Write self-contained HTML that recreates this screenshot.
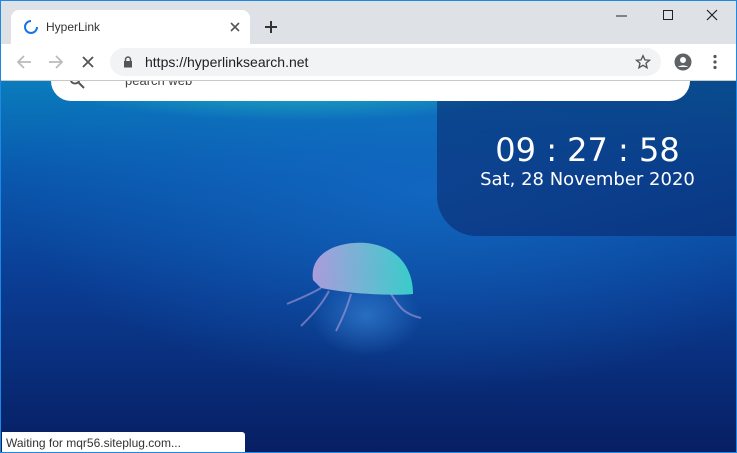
<!DOCTYPE html>
<html><head><meta charset="utf-8"><style>
*{margin:0;padding:0;box-sizing:border-box}
body{width:737px;height:453px;overflow:hidden;font-family:"Liberation Sans",sans-serif;background:#1a7fd6;position:relative}
.win{position:absolute;left:0;top:0;width:737px;height:453px;border:1px solid #1e88e5;overflow:hidden}
.tabbar{position:absolute;left:0;top:0;width:100%;height:43px;background:#dee1e6;z-index:5}
.tab{position:absolute;left:10px;top:9px;width:239px;height:34px;background:#fff;border-radius:8px 8px 0 0}
.tab .t{position:absolute;left:35px;top:10px;font-size:12px;color:#333}
.toolbar{position:absolute;left:0;top:43px;width:100%;height:37px;background:#fff;border-bottom:1px solid #c8c8c8;z-index:5}
.omni{position:absolute;left:109px;top:4px;width:551px;height:28px;background:#f1f3f4;border-radius:14px}
.omni .u{position:absolute;left:35px;top:6px;font-size:14px;color:#202124}
.content{position:absolute;left:0;top:80px;width:100%;height:373px;
background:
radial-gradient(ellipse 260px 40px at 300px 0px,rgba(40,200,190,.75),transparent),
radial-gradient(ellipse 420px 200px at 430px 110px,rgba(20,110,200,.7),transparent),
linear-gradient(180deg,#0a7cbc 0%,#0a58ae 25%,#0a3c92 55%,#081e62 100%)}
.search{position:absolute;left:50px;top:-20px;width:639px;height:40px;background:#fff;border-radius:0 0 20px 20px;z-index:2}
.clock{position:absolute;left:436px;top:0;width:301px;height:155px;background:rgba(8,30,95,.5);border-bottom-left-radius:40px;color:#fff;text-align:center;z-index:1}
.status{position:absolute;left:1px;top:431px;width:243px;height:22px;background:#fff;border-top-right-radius:3px;font-size:12px;color:#333;padding:4px 0 0 4px;z-index:6}
.jelly{position:absolute;left:270px;top:235px}
</style></head><body><div class="win">
<div class="tabbar">
 <div class="tab">
  <svg style="position:absolute;left:12px;top:9px" width="16" height="16" viewBox="0 0 16 16"><path d="M8 2 A6 6 0 1 0 14 8" fill="none" stroke="#1a73e8" stroke-width="2"/></svg>
  <span class="t">HyperLink</span>
  <svg style="position:absolute;left:219px;top:12px" width="10" height="10" viewBox="0 0 10 10"><path d="M1 1L9 9M9 1L1 9" stroke="#555" stroke-width="1.6"/></svg>
 </div>
 <svg style="position:absolute;left:263px;top:19px" width="14" height="14" viewBox="0 0 14 14"><path d="M7 1V13M1 7H13" stroke="#333" stroke-width="2"/></svg>
 <svg style="position:absolute;left:614px;top:8px" width="110" height="14" viewBox="0 0 110 14"><path d="M1 7H12" stroke="#222" stroke-width="1"/><rect x="48.5" y="1.5" width="9" height="9" fill="none" stroke="#222"/><path d="M92 1L102 11M102 1L92 11" stroke="#222" stroke-width="1.2"/></svg>
</div>
<div class="toolbar">
 <svg style="position:absolute;left:15px;top:10px" width="16" height="16" viewBox="0 0 16 16"><path d="M15 8H2M8 2L2 8L8 14" fill="none" stroke="#bbb" stroke-width="1.8"/></svg>
 <svg style="position:absolute;left:47px;top:10px" width="16" height="16" viewBox="0 0 16 16"><path d="M1 8H14M8 2L14 8L8 14" fill="none" stroke="#bbb" stroke-width="1.8"/></svg>
 <svg style="position:absolute;left:81px;top:12px" width="12" height="12" viewBox="0 0 12 12"><path d="M1 1L11 11M11 1L1 11" stroke="#555" stroke-width="1.8"/></svg>
 <div class="omni">
  <svg style="position:absolute;left:13px;top:8px" width="10" height="12" viewBox="0 0 10 12"><path d="M2.5 5V3.5a2.5 2.5 0 0 1 5 0V5" fill="none" stroke="#555" stroke-width="1.4"/><rect x="1" y="5" width="8" height="6.5" fill="#555"/></svg>
  <span class="u">https://hyperlinksearch.net</span>
  <svg style="position:absolute;left:525px;top:6px" width="16" height="16" viewBox="0 0 24 24"><path d="M12 2.5l2.9 6.3 6.8.6-5.2 4.5 1.6 6.7L12 17l-6.1 3.6 1.6-6.7-5.2-4.5 6.8-.6z" fill="none" stroke="#555" stroke-width="2"/></svg>
 </div>
 <svg style="position:absolute;left:673px;top:9px" width="18" height="18" viewBox="0 0 18 18"><circle cx="9" cy="9" r="8.5" fill="#5f6368"/><circle cx="9" cy="7" r="3" fill="#fff"/><path d="M3.8 14a6.5 4 0 0 1 10.4 0" fill="#fff"/></svg>
 <svg style="position:absolute;left:712px;top:10px" width="4" height="16" viewBox="0 0 4 16"><circle cx="2" cy="2.5" r="1.6" fill="#555"/><circle cx="2" cy="8" r="1.6" fill="#555"/><circle cx="2" cy="13.5" r="1.6" fill="#555"/></svg>
</div>
<div class="content">
 <div class="search">
  <svg style="position:absolute;left:18px;top:12px" width="16" height="16" viewBox="0 0 16 16"><circle cx="6" cy="6" r="4.5" fill="none" stroke="#555" stroke-width="1.8"/><path d="M9.5 9.5L15 15" stroke="#555" stroke-width="2"/></svg>
  <span style="position:absolute;left:74px;top:12px;font-size:13px;color:#444">pearch web</span>
 </div>
 <div class="clock">
  <div style="font-size:32px;margin-top:50px;line-height:38px;font-family:'DejaVu Sans','Liberation Sans',sans-serif">09 : 27 : 58</div>
  <div style="font-size:18px;margin-top:0px;font-family:'DejaVu Sans','Liberation Sans',sans-serif">Sat, 28 November 2020</div>
 </div>
</div>
<svg class="jelly" width="170" height="120" viewBox="0 0 170 120">
 <defs><linearGradient id="g" x1="0" x2="1"><stop offset="0" stop-color="#c7a8e6"/><stop offset="1" stop-color="#3fe3cf"/></linearGradient>
 <radialGradient id="h"><stop offset="0" stop-color="#4aa0f0" stop-opacity=".45"/><stop offset="1" stop-color="#4aa0f0" stop-opacity="0"/></radialGradient></defs>
 <ellipse cx="95" cy="80" rx="55" ry="40" fill="url(#h)"/>
 <path d="M42 44 C38 18 65 5 95 7 C125 10 142 30 142 58 C120 60 80 58 50 52 Z" fill="url(#g)" opacity=".85"/>
 <path d="M50 52 C40 58 30 62 16 68 M58 55 C50 70 40 80 30 90 M80 58 C75 75 70 85 65 95 M120 58 C128 70 132 78 150 82" stroke="#b9a0e0" stroke-width="2" fill="none" opacity=".55"/>
</svg>
<div class="status">Waiting for mqr56.siteplug.com...</div>
</div></body></html>
